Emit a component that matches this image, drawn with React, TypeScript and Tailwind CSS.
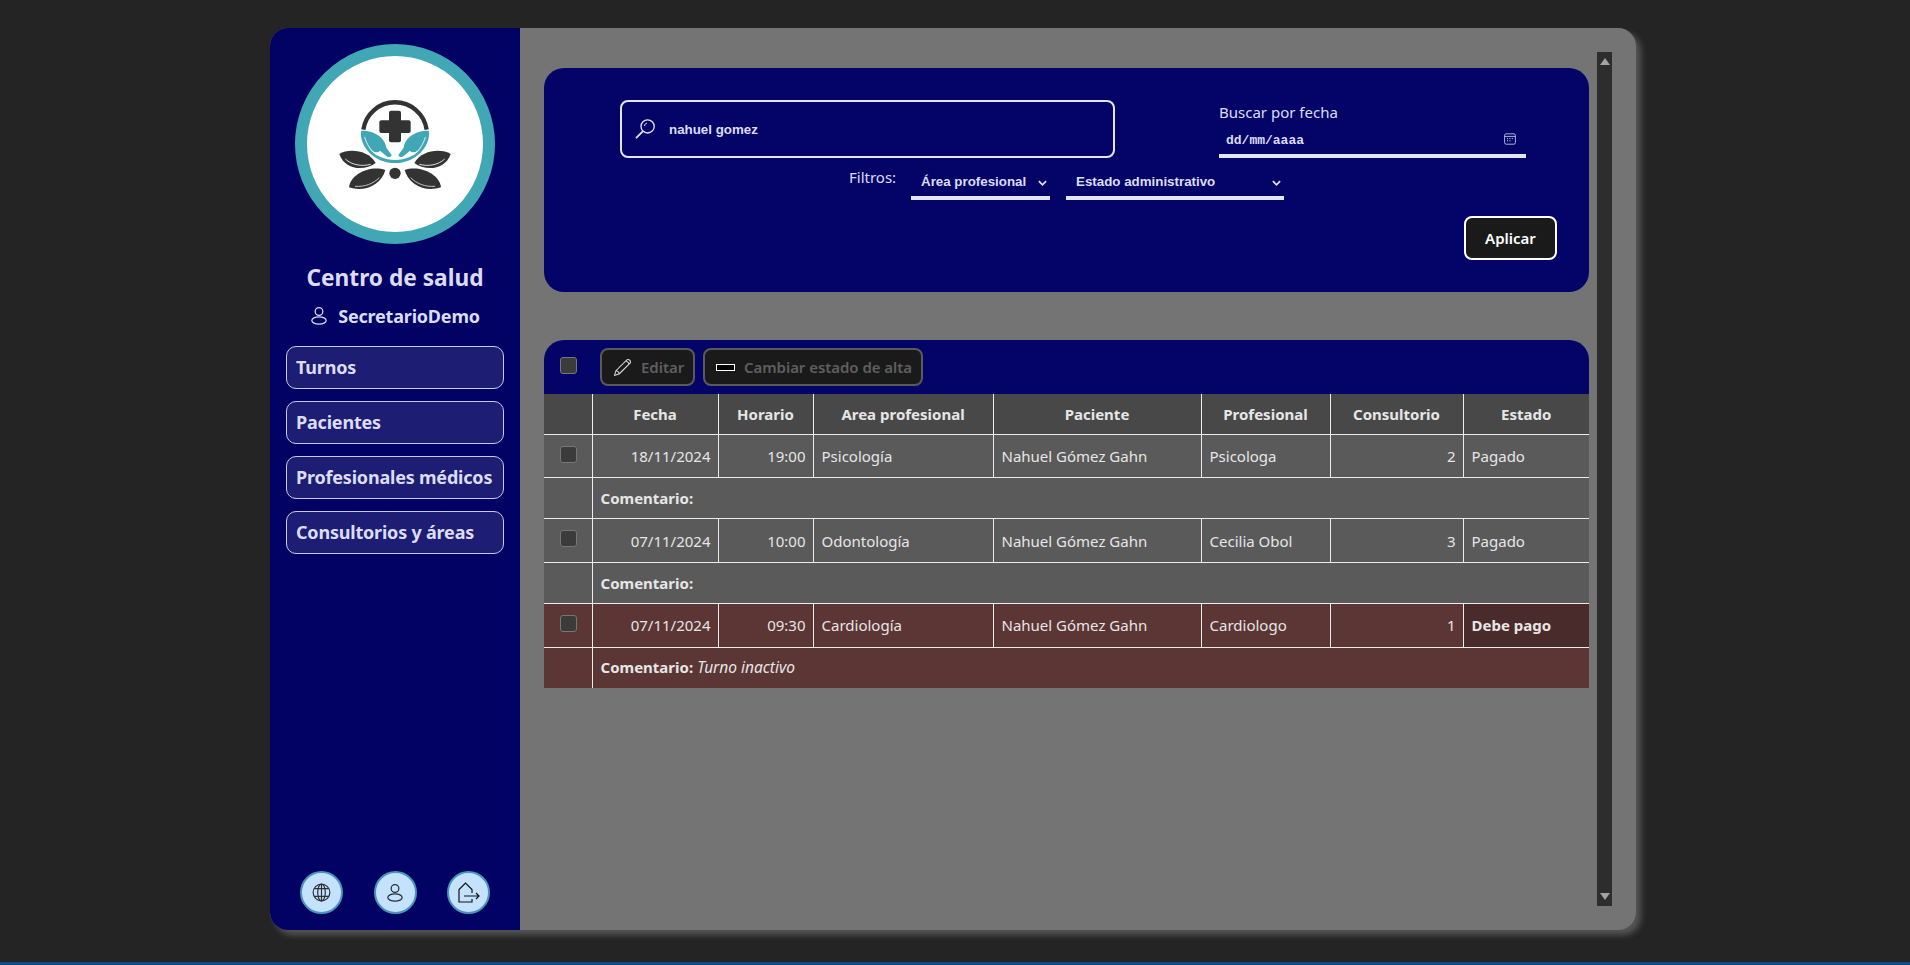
import React from "react";
import { SlPencil } from "react-icons/sl";

const segoe = "font-['Noto_Sans',sans-serif]";

const Logo = () => (
  <svg viewBox="0 0 510 510" className="w-[170px] h-[170px]">
    <path d="M160 212 A96 96 0 0 1 350 212" fill="none" stroke="#333" strokeWidth="13" />
    <rect x="208" y="184" width="94" height="38" rx="6" fill="#333" />
    <rect x="237" y="155" width="36" height="95" rx="6" fill="#333" />
    {[0, 1].map((i) => (
      <g key={i} transform={i ? "translate(510 0) scale(-1 1)" : undefined}>
        <path d="M153 215 C195 214 226 238 229 266 L245 288 Q243 297 232 293 L210 275 C200 290 160 270 153 215Z" fill="#42a7b5" />
        <path d="M153 215 C148 265 195 312 255 312 L255 303 C225 303 195 292 175 265Z" fill="#42a7b5" />
        <path d="M164 234 C170 256 182 274 200 288" fill="none" stroke="#fff" strokeWidth="2.5" />
        <path d="M88 285 C115 268 175 272 197 312 C165 336 105 335 88 285Z" fill="#333" />
        <path d="M106 300 C125 318 155 323 182 316" fill="none" stroke="#fff" strokeWidth="2.5" />
        <path d="M117 385 C122 345 180 318 226 333 C215 375 165 402 117 385Z" fill="#333" />
        <path d="M135 382 C165 384 190 374 208 356" fill="none" stroke="#ddd" strokeWidth="2.5" />
      </g>
    ))}
    <circle cx="255" cy="343" r="17" fill="#333" />
  </svg>
);

const PersonIcon = ({ className }: { className: string }) => (
  <svg viewBox="0 0 16 16" fill="none" stroke="currentColor" strokeWidth="1.1" className={className}>
    <circle cx="8" cy="4" r="3.4" />
    <ellipse cx="8" cy="12" rx="6.4" ry="3.3" />
  </svg>
);

const GlobeIcon = () => (
  <svg viewBox="0 0 20 20" fill="none" stroke="#2b2f38" strokeWidth="1.25" className="w-[19px] h-[19px]">
    <circle cx="10" cy="10" r="8.8" />
    <ellipse cx="10" cy="10" rx="4" ry="8.8" />
    <path d="M10 1.2V18.8M2.6 6H17.4M2.6 14H17.4" />
  </svg>
);

const ExitIcon = () => (
  <svg viewBox="0 0 22 22" fill="none" stroke="#111" strokeWidth="1.2" className="w-[22px] h-[22px]">
    <path d="M14 11 V7.5 L7.5 1 L1 7.5 V20 H14 V17" />
    <path d="M6 14 H21 M18 11 L21 14 L18 17" />
  </svg>
);

const SearchIcon = () => (
  <svg viewBox="0 0 20 20" fill="none" stroke="#e4e4f5" strokeWidth="1.3" className="w-[20px] h-[20px]">
    <circle cx="12.6" cy="7.4" r="6.6" />
    <path d="M8 12.2 L1 19.2" strokeWidth="1.8" />
    <path d="M9.4 7 A3.4 3.4 0 0 1 12 4" strokeWidth="0.9" />
  </svg>
);

const CalendarIcon = () => (
  <svg viewBox="0 0 12 12" fill="none" stroke="#d9d9f5" strokeWidth="0.8" className="w-[12px] h-[12px] -mt-[4px]">
    <rect x="0.6" y="0.8" width="10.8" height="10.4" rx="1.6" />
    <path d="M0.6 3.4H11.4" />
    <path d="M3 5.6h1M5.4 5.6h1M7.8 5.6h1M3 7.8h1M5.4 7.8h1" strokeWidth="1" />
  </svg>
);

const Chevron = () => (
  <svg viewBox="0 0 10 6" fill="none" stroke="#e4e4f5" strokeWidth="1.9" className="w-[9px] h-[6px] mt-[2px]">
    <path d="M1 1 L5 5 L9 1" />
  </svg>
);

const Checkbox = () => (
  <div className="w-[17px] h-[17px] bg-[#3b3b3b] border border-[#767676] rounded-[3px]" />
);

const navItems = ["Turnos", "Pacientes", "Profesionales médicos", "Consultorios y áreas"];

const Sidebar = () => (
  <aside className="w-[250px] shrink-0 bg-[#020265] flex flex-col items-center pt-[16px] pb-[16px] rounded-l-[18px] text-[#dcdcf7]">
    <div className="w-[200px] h-[200px] rounded-full border-[12px] border-[#42a7b5] bg-white flex items-center justify-center">
      <Logo />
    </div>
    <h1 className="mt-[19px] text-[22.7px] leading-[30px] font-bold">Centro de salud</h1>
    <div className="mt-[10px] h-[26px] flex items-center gap-[10px] text-[18px] font-bold tracking-[-0.2px]">
      <PersonIcon className="w-[18px] h-[18px]" />
      <span>SecretarioDemo</span>
    </div>
    <nav className="mt-[17px] w-[218px] flex flex-col gap-[12px]">
      {navItems.map((item) => (
        <div
          key={item}
          className="h-[43px] pl-[9px] flex items-center bg-[#1d1d73] border border-[#c9c9ef] rounded-[10px] text-[18px] font-bold tracking-[-0.2px] whitespace-nowrap"
        >
          {item}
        </div>
      ))}
    </nav>
    <div className="mt-auto w-[190px] flex justify-between">
      <div className="w-[43px] h-[43px] rounded-full bg-[#c4e2fb] border-[2.5px] border-[#4a95b5] flex items-center justify-center">
        <GlobeIcon />
      </div>
      <div className="w-[43px] h-[43px] rounded-full bg-[#c4e2fb] border-[2.5px] border-[#4a95b5] flex items-center justify-center text-[#2b2f38]">
        <PersonIcon className="w-[18px] h-[18px]" />
      </div>
      <div className="w-[43px] h-[43px] rounded-full bg-[#c4e2fb] border-[2.5px] border-[#4a95b5] flex items-center justify-center">
        <ExitIcon />
      </div>
    </div>
  </aside>
);

const FilterPanel = () => (
  <section className="h-[224px] bg-[#040468] rounded-[20px] pl-[76px] pr-[32px] pt-[32px] text-[#dcdcf7]">
    <div className="flex items-start">
      <div className="w-[495px] h-[58px] border-2 border-[#e4e4f5] rounded-[8px] flex items-center pl-[13px] gap-[14px] font-['Liberation_Sans',sans-serif] text-[13.33px] font-bold">
        <SearchIcon />
        <span className="mt-[1px]">nahuel gomez</span>
      </div>
      <div className="ml-[104px] w-[307px]">
        <div className="text-[15px] leading-[24px] h-[31px]">Buscar por fecha</div>
        <div className="h-[27px] border-b-4 border-[#e4e4f5] flex items-center justify-between pl-[7px] pr-[10px] pb-[3px]">
          <span className="font-['Liberation_Mono',monospace] text-[13px] font-bold">dd/mm/aaaa</span>
          <CalendarIcon />
        </div>
      </div>
    </div>
    <div className="mt-[10px] ml-[229px] flex items-start font-['Liberation_Sans',sans-serif]">
      <span className={`${segoe} text-[15px] leading-[24px] -mt-[3px] w-[62px]`}>Filtros:</span>
      <div className="w-[139px] h-[32px] border-b-4 border-[#e4e4f5] flex items-center justify-between pl-[10px] pr-[3px] text-[13.33px] font-bold">
        <span>Área profesional</span>
        <Chevron />
      </div>
      <div className="ml-[16px] w-[218px] h-[32px] border-b-4 border-[#e4e4f5] flex items-center justify-between pl-[10px] pr-[3px] text-[13.33px] font-bold">
        <span>Estado administrativo</span>
        <Chevron />
      </div>
    </div>
    <div className="mt-[16px] flex justify-end">
      <button className="w-[93px] h-[44px] bg-[#1a1a1a] border-2 border-white rounded-[8px] text-white text-[15px] font-semibold">
        Aplicar
      </button>
    </div>
  </section>
);

type Row = {
  fecha: string;
  hora: string;
  area: string;
  paciente: string;
  profesional: string;
  consultorio: number;
  estado: string;
  comentario?: string;
  inactive?: boolean;
};

const rows: Row[] = [
  { fecha: "18/11/2024", hora: "19:00", area: "Psicología", paciente: "Nahuel Gómez Gahn", profesional: "Psicologa", consultorio: 2, estado: "Pagado" },
  { fecha: "07/11/2024", hora: "10:00", area: "Odontología", paciente: "Nahuel Gómez Gahn", profesional: "Cecilia Obol", consultorio: 3, estado: "Pagado" },
  { fecha: "07/11/2024", hora: "09:30", area: "Cardiología", paciente: "Nahuel Gómez Gahn", profesional: "Cardiologo", consultorio: 1, estado: "Debe pago", comentario: "Turno inactivo", inactive: true },
];

const headers = ["Fecha", "Horario", "Area profesional", "Paciente", "Profesional", "Consultorio", "Estado"];

const TurnosTable = () => (
  <section className="mt-[48px]">
    <div className="h-[54px] bg-[#040468] rounded-t-[20px] flex items-center pl-[16px]">
      <div className="-mt-[3px]">
        <Checkbox />
      </div>
      <button className="ml-[23px] w-[95px] h-[38px] bg-[#1a1a1a] border-2 border-[#5a5a5a] rounded-[8px] flex items-center pl-[12px] gap-[10px] text-[15px] font-semibold text-[#5f5f5f]">
        <SlPencil className="w-[17px] h-[17px] text-[#d8d8d8]" />
        Editar
      </button>
      <button className="ml-[8px] w-[220px] h-[38px] bg-[#1a1a1a] border-2 border-[#5a5a5a] rounded-[8px] flex items-center pl-[11px] gap-[9px] text-[15px] font-semibold text-[#5f5f5f] tracking-[-0.05px]">
        <span className="w-[19px] h-[7px] bg-black border border-white" />
        Cambiar estado de alta
      </button>
    </div>
    <table className="w-full table-fixed border-collapse text-[15px] text-[#e6e6e6]">
      <colgroup>
        <col className="w-[48px]" />
        <col className="w-[126px]" />
        <col className="w-[95px]" />
        <col className="w-[180px]" />
        <col className="w-[208px]" />
        <col className="w-[129px]" />
        <col className="w-[133px]" />
        <col />
      </colgroup>
      <thead>
        <tr className="h-[40px] bg-[#484848]">
          <th />
          {headers.map((h) => (
            <th key={h} className="border-l border-[#ececec] font-bold text-center">
              {h}
            </th>
          ))}
        </tr>
      </thead>
      <tbody>
        {rows.map((r, i) => {
          const bg = r.inactive ? "bg-[#5c3535]" : "bg-[#5a5a5a]";
          const cell = `border-l border-t border-[#ececec] pl-[8px] pr-[7px] whitespace-nowrap ${r.inactive ? "" : "pt-[2px]"}`;
          return (
            <React.Fragment key={r.fecha + r.hora}>
              <tr className={`${i === 0 ? "h-[43px]" : "h-[44px]"} ${bg}`}>
                <td className="border-t border-[#ececec] pl-[16px] pb-[3px]">
                  <Checkbox />
                </td>
                <td className={`${cell} text-right`}>{r.fecha}</td>
                <td className={`${cell} text-right`}>{r.hora}</td>
                <td className={cell}>{r.area}</td>
                <td className={cell}>{r.paciente}</td>
                <td className={cell}>{r.profesional}</td>
                <td className={`${cell} text-right`}>{r.consultorio}</td>
                <td className={`${cell} ${r.inactive ? "font-bold bg-[#4a2b2b]" : ""}`}>{r.estado}</td>
              </tr>
              <tr className={`h-[41px] ${bg}`}>
                <td className="border-t border-[#ececec]" />
                <td colSpan={7} className={cell}>
                  <span className="font-bold">Comentario:</span>
                  {r.comentario && <em className="text-[15.5px]"> {r.comentario}</em>}
                </td>
              </tr>
            </React.Fragment>
          );
        })}
      </tbody>
    </table>
  </section>
);

const Scrollbar = () => (
  <div className="w-[15px] shrink-0 ml-[8px] bg-[#2d2d2d] flex flex-col items-center justify-between py-[6px]">
    <div className="w-0 h-0 border-x-[5px] border-x-transparent border-b-[7px] border-b-[#a3a3a3]" />
    <div className="w-0 h-0 border-x-[5px] border-x-transparent border-t-[7px] border-t-[#a3a3a3]" />
  </div>
);

export default function App() {
  return (
    <div className={`h-screen bg-[#242424] flex flex-col ${segoe}`}>
      <div className="flex-1 pl-[270px] pt-[28px]">
        <div className="w-[1366px] h-[902px] flex bg-[#747474] rounded-[18px] shadow-[5px_5px_6px_#555]">
          <Sidebar />
          <main className="flex-1 flex pl-[24px] pr-[24px] py-[24px]">
            <div className="flex-1 pt-[16px]">
              <FilterPanel />
              <TurnosTable />
            </div>
            <Scrollbar />
          </main>
        </div>
      </div>
      <div className="h-[3px] bg-[#0f4c81]" />
    </div>
  );
}
